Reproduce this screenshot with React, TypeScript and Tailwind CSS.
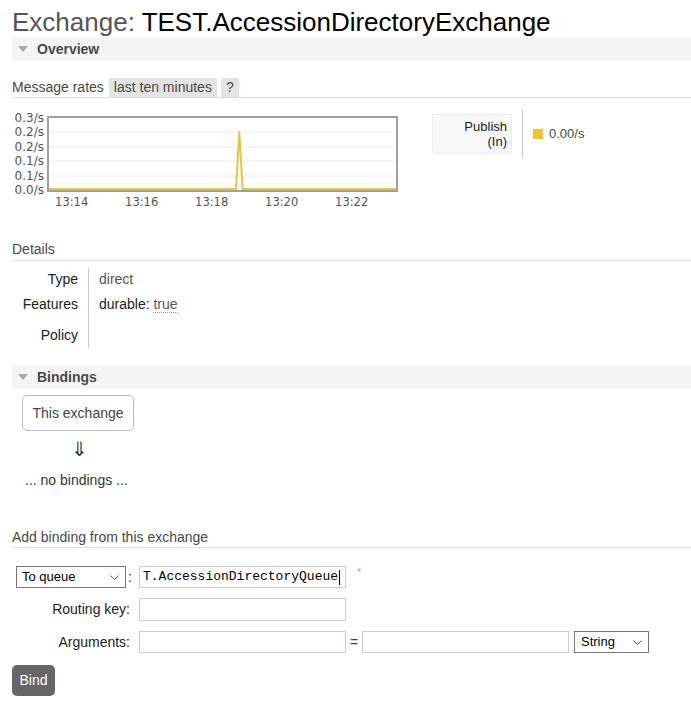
import React from "react";

const sans = { fontFamily: '"Liberation Sans", Arial, sans-serif' };

function SectionHeader({ title }: { title: string }) {
  return (
    <div className="flex h-[24px] items-center bg-[#f5f5f5] pl-[6px]">
      <svg width="10" height="8" viewBox="0 0 10 8" className="mr-[9px]">
        <path d="M0 1 L10 1 L5 7 Z" fill="#aaa" />
      </svg>
      <span className="text-[14px] font-bold text-[#484848]">{title}</span>
    </div>
  );
}

function RateChart() {
  const yLabels = [
    { y: 8, t: "0.3/s" },
    { y: 22, t: "0.2/s" },
    { y: 37, t: "0.2/s" },
    { y: 51, t: "0.1/s" },
    { y: 66, t: "0.1/s" },
    { y: 80, t: "0.0/s" },
  ];
  const xLabels = ["13:14", "13:16", "13:18", "13:20", "13:22"];
  return (
    <svg width="392" height="100" viewBox="0 0 392 100" className="block">
      {[22, 37, 51, 66].map((y) => (
        <line key={y} x1="36" x2="384" y1={y} y2={y} stroke="#ececec" strokeWidth="1" />
      ))}
      <rect x="36" y="7" width="349" height="74" fill="none" stroke="#a0a0a0" strokeWidth="2" />
      {yLabels.map((l, i) => (
        <text
          key={i}
          x="32"
          y={l.y + 4}
          textAnchor="end"
          fontSize="12"
          fill="#545454"
          fontFamily='"DejaVu Sans", Verdana, sans-serif'
        >
          {l.t}
        </text>
      ))}
      {xLabels.map((t, i) => (
        <text
          key={t}
          x={59.7 + i * 70}
          y="96"
          textAnchor="middle"
          fontSize="11.5"
          fill="#545454"
          fontFamily='"DejaVu Sans", Verdana, sans-serif'
        >
          {t}
        </text>
      ))}
      <polyline
        points="37,79 224,79 227.3,22 230.6,79 384,79"
        fill="none"
        stroke="#edc240"
        strokeWidth="2"
        strokeLinejoin="round"
      />
    </svg>
  );
}

export default function App() {
  return (
    <div className="min-h-[710px] bg-white pl-[12px] text-[14px] text-[#484848]" style={sans}>
      {/* Title */}
      <h1 className="pt-[8px] text-[26px] leading-[29px] font-normal whitespace-nowrap">
        <span className="text-[#555]">Exchange: </span>
        <span className="text-black">TEST.AccessionDirectoryExchange</span>
      </h1>

      <SectionHeader title="Overview" />

      {/* Message rates */}
      <div className="mt-[17px] flex items-end border-b border-[#ddd]">
        <span className="leading-[19px]">Message rates</span>
        <span className="ml-[5px] bg-[#e4e4e4] px-[5px] leading-[19px]">last ten minutes</span>
        <span className="ml-[4px] bg-[#e4e4e4] px-[5px] leading-[19px]">?</span>
      </div>

      <div className="mt-[12px] flex">
        <RateChart />
        <div className="ml-[28px] flex">
          <div className="mt-[4px] h-[40px] w-[80px] rounded-[3px] border border-[#eee] bg-[#f8f8f8] pr-[4px] text-right text-[13px] leading-[15px] text-[#222] pt-[4px]">
            Publish
            <br />
            (In)
          </div>
          <div className="ml-[10px] flex h-[48px] items-center border-l border-[#ccc] pl-[10px]">
            <span className="mr-[6px] inline-block h-[10px] w-[10px] bg-[#edc240]" />
            <span className="text-[13px] text-[#484848]">0.00/s</span>
          </div>
        </div>
      </div>

      {/* Details */}
      <div className="mt-[31px] border-b border-[#ddd] pb-[2px] leading-[17px]">Details</div>
      <div className="mt-[7px] flex">
        <div className="w-[66px] text-right text-[#222]">
          <div className="pt-[1px] leading-[20px]">Type</div>
          <div className="mt-[5px] leading-[20px]">Features</div>
          <div className="mt-[11px] leading-[20px]">Policy</div>
        </div>
        <div className="ml-[10px] h-[80px] border-l border-[#ccc]" />
        <div className="ml-[10px] text-[#555]">
          <div className="pt-[1px] leading-[20px]">direct</div>
          <div className="mt-[5px] leading-[20px]">
            <span className="text-[#222]">durable: </span>
            <span className="border-b border-dotted border-[#999]">true</span>
          </div>
        </div>
      </div>

      <div className="mt-[17px]">
        <SectionHeader title="Bindings" />
      </div>

      {/* Bindings */}
      <div className="mt-[6px] ml-[10px] flex h-[36px] w-[112px] items-center justify-center rounded-[5px] border border-[#bbb] text-[#444]">
        This exchange
      </div>
      <div className="mt-[7px] ml-[59px] text-[20px] leading-[22px] text-[#333]">⇓</div>
      <div className="mt-[11px] ml-[13px] leading-[18px] text-[#333]">... no bindings ...</div>

      {/* Add binding */}
      <div className="mt-[40px] border-b border-[#ddd] pb-[1px] leading-[17px]">Add binding from this exchange</div>

      <div className="mt-[18px] flex flex-col gap-[10px] text-[#222]">
        <div className="flex items-center">
          <div className="relative ml-[4px] flex h-[22px] w-[110px] items-center border border-[#767676] bg-white pl-[5px] text-[13px] text-black">
            To queue
            <svg width="9" height="6" viewBox="0 0 9 6" className="absolute right-[6px] top-[8px]">
              <path d="M0.5 0.5 L4.5 4.5 L8.5 0.5" fill="none" stroke="#555" strokeWidth="1" />
            </svg>
          </div>
          <span className="ml-[2px] w-[11px]">:</span>
          <div
            className="flex h-[22px] w-[207px] items-center border border-[#ccc] pl-[3px] text-[13px] text-black"
            style={{ fontFamily: '"Liberation Mono", "Courier New", monospace' }}
          >
            T.AccessionDirectoryQueue
            <span className="ml-[1px] inline-block h-[15px] w-[1px] bg-black" />
          </div>
          <span className="ml-[11px] self-start text-[11px] leading-[12px] text-[#f88]">*</span>
        </div>
        <div className="flex items-center">
          <span className="w-[118px] text-right">Routing key:</span>
          <div className="ml-[9px] h-[23px] w-[207px] border border-[#ccc]" />
        </div>
        <div className="flex items-center">
          <span className="w-[118px] text-right">Arguments:</span>
          <div className="ml-[9px] h-[22px] w-[207px] border border-[#ccc]" />
          <span className="ml-[4px] w-[12px] text-[#444]">=</span>
          <div className="h-[22px] w-[207px] border border-[#ccc]" />
          <div className="relative ml-[5px] flex h-[22px] w-[75px] items-center border border-[#767676] bg-white pl-[6px] text-[13px] text-black">
            String
            <svg width="9" height="6" viewBox="0 0 9 6" className="absolute right-[6px] top-[8px]">
              <path d="M0.5 0.5 L4.5 4.5 L8.5 0.5" fill="none" stroke="#555" strokeWidth="1" />
            </svg>
          </div>
        </div>
      </div>

      <button className="mt-[12px] h-[31px] w-[43px] rounded-[5px] bg-[#666] text-[14px] text-white">Bind</button>
    </div>
  );
}
